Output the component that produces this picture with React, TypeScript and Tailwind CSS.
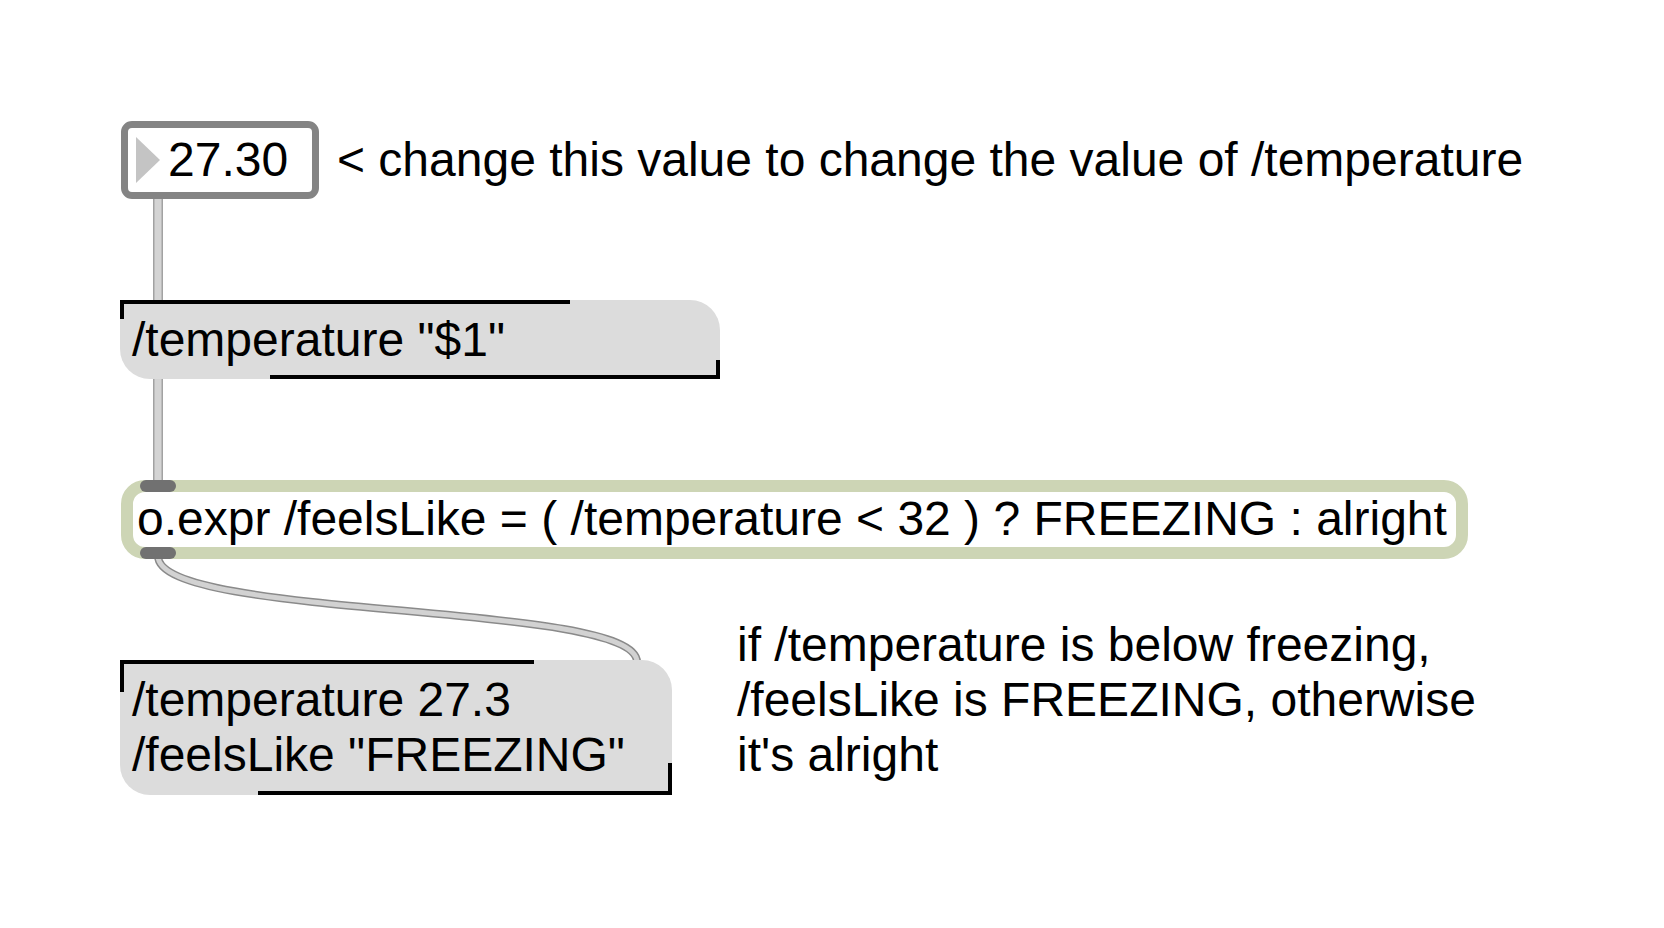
import React from "react";

const font = { fontFamily: '"Liberation Sans", Arial, Helvetica, sans-serif' };

// a Max-style message box: grey body, black brackets top-left and bottom-right
function MessageBox({ className, lines, bracketH }: { className: string; lines: string[]; bracketH: string }) {
    return <div className={`absolute bg-[#dcdcdc] rounded-tr-[30px] rounded-bl-[30px] ${className}`}>
        <div className="absolute left-0 top-0 w-3/4 h-[4px] bg-black" />
        <div className={`absolute left-0 top-0 w-[4px] bg-black ${bracketH}`} />
        <div className="absolute right-0 bottom-0 w-3/4 h-[4px] bg-black" />
        <div className={`absolute right-0 bottom-0 w-[4px] bg-black ${bracketH}`} />
        <div className="pl-[12px] pt-[12px] text-[48px] leading-[55px] text-black whitespace-nowrap">
            {lines.map((l, i) => <div key={i}>{l}</div>)}
        </div>
    </div>
}

function Cords() {
    return <svg className="absolute inset-0 pointer-events-none" width="1664" height="928">
        {/* number box -> message */}
        <line x1="158" y1="198" x2="158" y2="302" stroke="#a2a2a2" strokeWidth="10" />
        <line x1="158" y1="198" x2="158" y2="302" stroke="#d4d4d4" strokeWidth="7" />
        {/* message -> o.expr */}
        <line x1="158" y1="378" x2="158" y2="482" stroke="#a2a2a2" strokeWidth="10" />
        <line x1="158" y1="378" x2="158" y2="482" stroke="#d4d4d4" strokeWidth="7" />
        {/* o.expr -> result */}
        <path d="M158 556 C158 620, 637 601, 637 662" fill="none" stroke="#8a8a8a" strokeWidth="8" />
        <path d="M158 556 C158 620, 637 601, 637 662" fill="none" stroke="#d2d2d2" strokeWidth="5" />
    </svg>
}

export default function App() {
    return <div className="relative w-full h-[928px] bg-white overflow-hidden" style={font}>
        <Cords />

        {/* float number box with its comment */}
        <div className="absolute left-[121px] top-[121px] flex items-start gap-[18px]">
            <div className="w-[198px] h-[78px] border-[7px] border-[#848484] rounded-[11px] bg-white flex items-start pl-[8px]">
                <svg width="24" height="46" className="mt-[9px] shrink-0">
                    <polygon points="0,0 24,23 0,46" fill="#c4c4c4" />
                </svg>
                <div className="ml-[8px] mt-[4px] text-[48px] leading-[55px] text-black">27.30</div>
            </div>
            <div className="mt-[11px] text-[48px] leading-[55px] text-black whitespace-nowrap">
                &lt; change this value to change the value of /temperature
            </div>
        </div>

        <MessageBox className="left-[120px] top-[300px] w-[600px] h-[79px]" bracketH="h-[19px]" lines={['/temperature "$1"']} />

        {/* o.expr object */}
        <div className="absolute left-[121px] top-[480px] w-[1347px] h-[79px] border-[12px] border-[#cdd5b5] rounded-[24px] bg-white">
            <div className="pl-[4px] text-[48px] leading-[54px] text-black whitespace-nowrap">
                o.expr /feelsLike = ( /temperature &lt; 32 ) ? FREEZING : alright
            </div>
            <div className="absolute left-[7px] top-[-12px] w-[36px] h-[12px] rounded-full bg-[#717171]" />
            <div className="absolute left-[7px] bottom-[-12px] w-[36px] h-[12px] rounded-full bg-[#717171]" />
        </div>

        <MessageBox className="left-[120px] top-[660px] w-[552px] h-[135px]" bracketH="h-[32px]" lines={["/temperature 27.3", '/feelsLike "FREEZING"']} />

        <div className="absolute left-[737px] top-[617px] text-[48px] leading-[55px] text-black whitespace-nowrap">
            <div>if /temperature is below freezing,</div>
            <div>/feelsLike is FREEZING, otherwise</div>
            <div>it's alright</div>
        </div>
    </div>
}
